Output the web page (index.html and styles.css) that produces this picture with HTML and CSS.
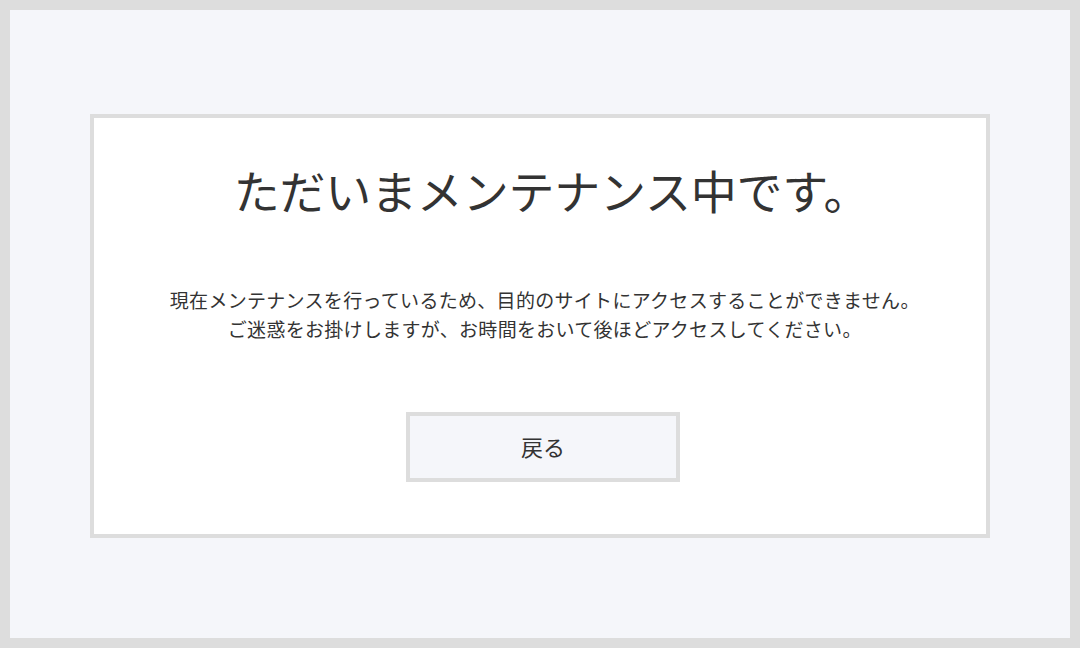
FILE: index.html
```html
<!DOCTYPE html>
<html lang="ja">
<head>
<meta charset="utf-8">
<title>メンテナンス中</title>
<link rel="stylesheet" href="styles.css">
</head>
<body>
<main class="card">
  <h1 class="title">ただいまメンテナンス中です<span class="punct-end">。</span></h1>
  <p class="message">現在メンテナンスを行っているため、目的のサイトにアクセスすることができません<span class="punct-end">。</span><br>ご迷惑をお掛けしますが、お時間をおいて後ほどアクセスしてください<span class="punct-end">。</span></p>
  <button class="back" type="button">戻る</button>
</main>
</body>
</html>
```

FILE: styles.css
```css
html, body {
  margin: 0;
  padding: 0;
}
body {
  box-sizing: border-box;
  width: 1080px;
  height: 648px;
  border: 10px solid #dddddd;
  background: #f5f6fa;
  display: flex;
  align-items: flex-start;
  justify-content: center;
  font-family: "Noto Sans CJK JP", "Noto Sans", sans-serif;
  color: #333333;
}
.card {
  box-sizing: border-box;
  width: 900px;
  margin-top: 104px;
  background: #ffffff;
  border: 4px solid #dddddd;
  padding: 38px 0 52px;
  display: flex;
  flex-direction: column;
  align-items: center;
}
.title {
  margin: 0;
  font-size: 46px;
  font-weight: 400;
  line-height: 66px;
  color: #333333;
  letter-spacing: -0.2px;
  white-space: nowrap;
}
.punct-end {
  margin-right: -0.5em;
}
.message {
  margin: 63px 0 0;
  font-size: 19px;
  letter-spacing: 0.3px;
  line-height: 29px;
  text-align: center;
  color: #333333;
  white-space: nowrap;
}
.back {
  margin-top: 69px;
  margin-left: 6px;
  box-sizing: border-box;
  width: 274px;
  height: 70px;
  background: #f5f6fa;
  border: 4px solid #dddddd;
  font-family: inherit;
  font-size: 22px;
  line-height: 1;
  color: #333333;
  padding: 0 0 3px;
  cursor: pointer;
}
```
